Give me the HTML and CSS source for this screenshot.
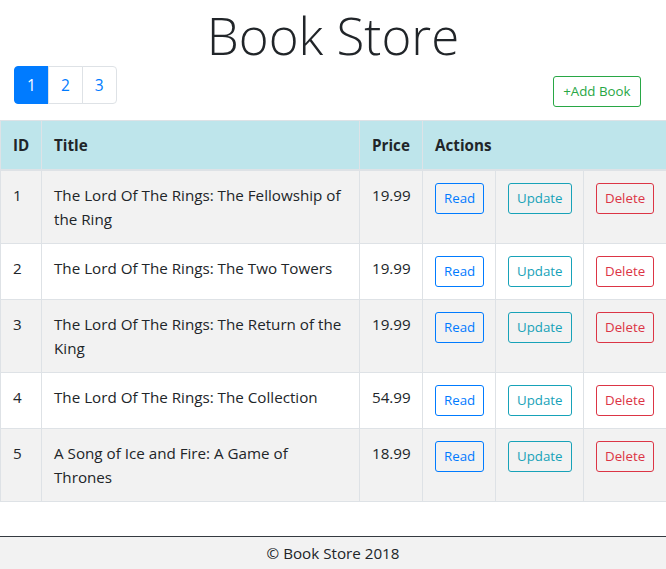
FILE: index.html
```html
<!DOCTYPE html>
<html lang="en">
<head>
<meta charset="utf-8">
<title>Book Store</title>
<link rel="stylesheet" href="styles.css">
</head>
<body>
<main class="content">
  <h1 class="display">Book Store</h1>
  <div class="toolbar">
    <ul class="pagination">
      <li class="page-item active"><a class="page-link" href="#">1</a></li>
      <li class="page-item"><a class="page-link" href="#">2</a></li>
      <li class="page-item"><a class="page-link" href="#">3</a></li>
    </ul>
    <button class="btn btn-success btn-add">+Add Book</button>
  </div>
  <table class="books">
    <colgroup>
      <col class="c-id"><col class="c-title"><col class="c-price"><col class="c-read"><col class="c-update"><col class="c-delete">
    </colgroup>
    <thead>
      <tr><th>ID</th><th>Title</th><th>Price</th><th colspan="3">Actions</th></tr>
    </thead>
    <tbody>
      <tr><td>1</td><td>The Lord Of The Rings: The Fellowship of the Ring</td><td>19.99</td>
        <td><button class="btn btn-primary">Read</button></td><td><button class="btn btn-info">Update</button></td><td><button class="btn btn-danger">Delete</button></td></tr>
      <tr><td>2</td><td>The Lord Of The Rings: The Two Towers</td><td>19.99</td>
        <td><button class="btn btn-primary">Read</button></td><td><button class="btn btn-info">Update</button></td><td><button class="btn btn-danger">Delete</button></td></tr>
      <tr><td>3</td><td>The Lord Of The Rings: The Return of the King</td><td>19.99</td>
        <td><button class="btn btn-primary">Read</button></td><td><button class="btn btn-info">Update</button></td><td><button class="btn btn-danger">Delete</button></td></tr>
      <tr><td>4</td><td>The Lord Of The Rings: The Collection</td><td>54.99</td>
        <td><button class="btn btn-primary">Read</button></td><td><button class="btn btn-info">Update</button></td><td><button class="btn btn-danger">Delete</button></td></tr>
      <tr><td>5</td><td>A Song of Ice and Fire: A Game of Thrones</td><td>18.99</td>
        <td><button class="btn btn-primary">Read</button></td><td><button class="btn btn-info">Update</button></td><td><button class="btn btn-danger">Delete</button></td></tr>
    </tbody>
  </table>
</main>
<footer class="footer">© Book Store 2018</footer>
</body>
</html>
```
FILE: styles.css
```css
* { box-sizing: border-box; }
html, body { height: 100%; }
body {
  margin: 0;
  font-family: "Open Sans", "Noto Sans", sans-serif;
  font-size: 15.2px;
  line-height: 24px;
  color: #212529;
  background: #fff;
  display: flex;
  flex-direction: column;
}
.content { flex: 1 0 auto; }
.display {
  margin: 0;
  height: 66px;
  font-size: 51px;
  font-weight: 300;
  line-height: 70px;
  text-align: center;
}
.toolbar {
  display: flex;
  justify-content: space-between;
  align-items: flex-start;
  padding: 0 25px 13px 14px;
}
.pagination {
  display: flex;
  list-style: none;
  margin: 0;
  padding: 0;
}
.page-link {
  display: block;
  padding: 8px 12px;
  font-size: 15.5px;
  line-height: 20px;
  color: #007bff;
  text-decoration: none;
  border: 1px solid #dee2e6;
  margin-left: -1px;
  background: #fff;
}
.page-item:first-child .page-link { margin-left: 0; border-radius: 4px 0 0 4px; }
.page-item:last-child .page-link { border-radius: 0 4px 4px 0; }
.page-item.active .page-link { background: #007bff; border-color: #007bff; color: #fff; }
.btn {
  display: inline-block;
  font-family: inherit;
  font-size: 13.3px;
  line-height: 21px;
  padding: 4px 8px;
  border: 1px solid;
  border-radius: 3px;
  background: transparent;
  cursor: pointer;
}
.btn-add { margin-top: 10px; padding: 4px 9.5px; }
.btn-success { color: #28a745; border-color: #28a745; }
.btn-primary { color: #007bff; border-color: #007bff; }
.btn-info { color: #17a2b8; border-color: #17a2b8; }
.btn-danger { color: #dc3545; border-color: #dc3545; }
.books {
  width: 100%;
  border-collapse: collapse;
  table-layout: fixed;
}
.c-id { width: 41px; }
.c-title { width: 318px; }
.c-price { width: 63px; }
.c-read { width: 73px; }
.c-update { width: 88px; }
.c-delete { width: 83px; }
.books th, .books td {
  padding: 12px;
  text-align: left;
  vertical-align: top;
  border: 1px solid #dee2e6;
}
.books thead th {
  background: #bee5eb;
  font-weight: 700;
  border-bottom-width: 2px;
}
.books tbody tr:nth-child(odd) { background: #f2f2f2; }
.footer {
  flex: 0 0 auto;
  background: #f2f2f2;
  border-top: 1px solid #343a40;
  text-align: center;
  padding: 4px 0;
}
```
